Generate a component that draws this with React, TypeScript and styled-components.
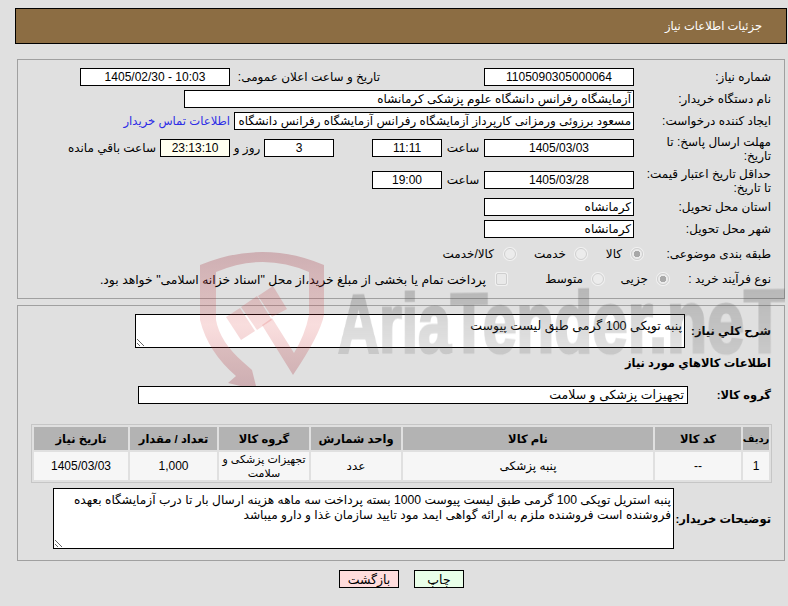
import React from "react";
import styled, { createGlobalStyle } from "styled-components";

const Global = createGlobalStyle`
  html, body { margin: 0; padding: 0; background: #e0e0e0; }
  body { font-family: "Liberation Sans", "DejaVu Sans", sans-serif; font-size: 12px; color: #000; }
`;

const Page = styled.div`
  position: relative;
  width: 788px;
  height: 606px;
  overflow: hidden;
  padding: 8px 1px 0 15px;
  box-sizing: border-box;
  direction: rtl;
`;

const Header = styled.div`
  height: 36px;
  box-sizing: border-box;
  border: 1px solid #000;
  background: #8c6d43;
  color: #fff;
  display: flex;
  align-items: center;
  padding-right: 24px;
  font-size: 11.5px;
`;

const Panel = styled.section<{ $h: number; $mt: number }>`
  box-sizing: border-box;
  height: ${(p) => p.$h}px;
  margin: ${(p) => p.$mt}px 2px 0 2px;
  border: 1px solid #a0a0a0;
  padding-right: 13px;
`;

const Row = styled.div<{ $top: number; $h?: number }>`
  display: flex;
  align-items: center;
  margin-top: ${(p) => p.$top}px;
  height: ${(p) => p.$h ?? 18}px;
`;

const Label = styled.div<{ $pt?: number }>`
  width: 134px;
  flex: none;
  line-height: 14px;
  margin-left: 3px;
  padding-top: ${(p) => p.$pt ?? 0}px;
`;

const StrongLabel = styled.div<{ $w: number }>`
  width: ${(p) => p.$w}px;
  flex: none;
  font-weight: 700;
  font-size: 11.5px;
  white-space: nowrap;
`;

const Field = styled.div<{ $w: number; $center?: boolean; $bg?: string; $pr?: number; $fs?: number; $mr?: number; $ltr?: boolean }>`
  width: ${(p) => p.$w}px;
  height: 18px;
  flex: none;
  box-sizing: border-box;
  margin-right: ${(p) => p.$mr ?? 0}px;
  border: 1px solid #000;
  background: ${(p) => p.$bg ?? "#fff"};
  direction: ${(p) => (p.$ltr ? "ltr" : "rtl")};
  text-align: ${(p) => (p.$center ? "center" : "right")};
  line-height: 16px;
  padding-right: ${(p) => (p.$center ? 0 : p.$pr ?? 2)}px;
  white-space: nowrap;
  overflow: hidden;
  font-size: ${(p) => p.$fs ?? 12}px;
`;

const Caption = styled.div<{ $w?: number; $mr?: number; $right?: boolean }>`
  flex: none;
  width: ${(p) => (p.$w ? `${p.$w}px` : "auto")};
  margin-right: ${(p) => p.$mr ?? 0}px;
  text-align: ${(p) => (p.$right ? "right" : "center")};
  white-space: nowrap;
`;

const ContactLink = styled.a`
  color: #2d2de6;
  margin-right: 4px;
  white-space: nowrap;
  text-decoration: none;
  font-size: 11.6px;
`;

const Options = styled.div`
  display: flex;
  align-items: center;
`;

const Radio = styled.span<{ $on?: boolean; $ml: number; $mr?: number }>`
  width: 12px;
  height: 12px;
  flex: none;
  box-sizing: border-box;
  border-radius: 50%;
  border: 1px solid #cfcfcf;
  background: ${(p) => (p.$on ? "radial-gradient(circle, #a9a9a9 0 3px, #ececec 3.5px)" : "#ececec")};
  box-shadow: 0 0 0 1px #f1f1f1;
  margin-left: ${(p) => p.$ml}px;
  margin-right: ${(p) => p.$mr ?? 0}px;
`;

const Check = styled.span<{ $ml: number }>`
  width: 11px;
  height: 12px;
  flex: none;
  box-sizing: border-box;
  border: 1px solid #cfcfcf;
  background: #e9e9e9;
  border-radius: 2px;
  box-shadow: 0 0 0 1px #f1f1f1;
  margin-left: ${(p) => p.$ml}px;
`;

const OptionText = styled.span<{ $w?: number; $fs?: number }>`
  white-space: nowrap;
  flex: none;
  width: ${(p) => (p.$w ? `${p.$w}px` : "auto")};
  font-size: ${(p) => p.$fs ?? 12}px;
`;

const Area = styled.textarea<{ $w: number; $h: number; $fs?: number }>`
  display: block;
  box-sizing: border-box;
  width: ${(p) => p.$w}px;
  height: ${(p) => p.$h}px;
  flex: none;
  margin: 0;
  border: 1px solid #000;
  border-radius: 0;
  background: #fff;
  padding: 4px 2px 0 2px;
  font: ${(p) => p.$fs ?? 12}px/15px "Liberation Sans", "DejaVu Sans", sans-serif;
  color: #000;
  outline: none;
  direction: rtl;
`;

const Grid = styled.div`
  display: grid;
  grid-template-columns: 26px 86px 250px 90px 90px 87px 94px;
  grid-template-rows: 23px 28px;
  gap: 2px;
  width: 735px;
  margin: 20px -1px 0 0;
  padding: 2px 2px;
  border: 1px solid #c6c6c6;
`;

const Th = styled.div<{ $fs?: number }>`
  background: #b3b3b3;
  font-weight: 700;
  font-size: ${(p) => p.$fs ?? 11.5}px;
  display: flex;
  align-items: center;
  justify-content: center;
  white-space: nowrap;
`;

const Td = styled.div<{ $fs?: number }>`
  background: #f6f6f6;
  display: flex;
  align-items: center;
  justify-content: center;
  text-align: center;
  line-height: 14px;
  font-size: ${(p) => p.$fs ?? 12}px;
  white-space: pre;
`;

const Actions = styled.div`
  display: flex;
  gap: 15px;
  margin-top: 9px;
  padding-right: 323px;
`;

const Btn = styled.button<{ $bg: string; $w: number }>`
  width: ${(p) => p.$w}px;
  height: 18px;
  box-sizing: border-box;
  padding: 0;
  border: 1px solid #000;
  background: ${(p) => p.$bg};
  font: 12.5px "Liberation Sans", "DejaVu Sans", sans-serif;
  color: #000;
`;

const Watermark = styled.div`
  position: absolute;
  top: 0;
  left: 0;
  width: 788px;
  height: 386px;
  overflow: hidden;
  pointer-events: none;
  direction: ltr;
`;

const ShieldBox = styled.div`
  position: absolute;
  left: 190px;
  top: 240px;
  width: 150px;
  height: 146px;
`;

const Brand = styled.span`
  position: absolute;
  left: 338px;
  top: 283px;
  font: 700 82px/82px "Liberation Sans", sans-serif;
  white-space: nowrap;
  color: #4e4e4e;
  -webkit-text-stroke: 3px #4e4e4e;
  opacity: 0.28;
  -webkit-mask-image: linear-gradient(180deg, #000 10%, rgba(0, 0, 0, 0.6) 80%);
  mask-image: linear-gradient(180deg, #000 10%, rgba(0, 0, 0, 0.6) 80%);
  transform-origin: 0 69px;
  transform: matrix3d(0.69, 0, 0, -0.00015, 0, 1, 0, 0, 0, 0, 1, 0, 0, 0, 0, 1);
`;

const heads = ["ردیف", "کد کالا", "نام کالا", "واحد شمارش", "گروه کالا", "تعداد / مقدار", "تاریخ نیاز"];
const cells = ["1", "--", "پنبه پزشکی", "عدد", "تجهیزات پزشکی و\nسلامت", "1,000", "1405/03/03"];

export default function App() {
  return (
    <Page>
      <Global />
      <Header>جزئیات اطلاعات نیاز</Header>

      <Panel $h={240} $mt={15}>
        <Row $top={8}>
          <Label>شماره نیاز:</Label>
          <Field $w={150} $center>1105090305000064</Field>
          <Caption $w={145} $mr={104} $right>تاریخ و ساعت اعلان عمومی:</Caption>
          <Field $w={150} $center $ltr $mr={5}>1405/02/30 - 10:03</Field>
        </Row>
        <Row $top={4}>
          <Label>نام دستگاه خریدار:</Label>
          <Field $w={450}>آزمایشگاه رفرانس دانشگاه علوم پزشکی کرمانشاه</Field>
        </Row>
        <Row $top={4}>
          <Label>ایجاد کننده درخواست:</Label>
          <Field $w={400} $fs={11.9}>مسعود برزوئی ورمزانی کارپرداز آزمایشگاه رفرانس آزمایشگاه رفرانس دانشگاه علوم پزشکی</Field>
          <ContactLink>اطلاعات تماس خریدار</ContactLink>
        </Row>
        <Row $top={9}>
          <Label $pt={2}>مهلت ارسال پاسخ: تا تاریخ:</Label>
          <Field $w={150} $center>1405/03/03</Field>
          <Caption $w={42}>ساعت</Caption>
          <Field $w={70} $center>11:11</Field>
          <Field $w={70} $center $mr={38}>3</Field>
          <Caption $w={34}>روز و</Caption>
          <Field $w={70} $center $bg="#fffff0">23:13:10</Field>
          <Caption $mr={4}>ساعت باقي مانده</Caption>
        </Row>
        <Row $top={14}>
          <Label $pt={2}>حداقل تاریخ اعتبار قیمت: تا تاریخ:</Label>
          <Field $w={150} $center>1405/03/28</Field>
          <Caption $w={42}>ساعت</Caption>
          <Field $w={70} $center>19:00</Field>
        </Row>
        <Row $top={9}>
          <Label>استان محل تحویل:</Label>
          <Field $w={150}>کرمانشاه</Field>
        </Row>
        <Row $top={4}>
          <Label>شهر محل تحویل:</Label>
          <Field $w={150}>کرمانشاه</Field>
        </Row>
        <Row $top={7}>
          <Label>طبقه بندی موضوعی:</Label>
          <Options>
            <Radio $on $ml={9} $mr={-9} />
            <OptionText $w={35}>کالا</OptionText>
            <Radio $ml={9} />
            <OptionText $w={50}>خدمت</OptionText>
            <Radio $ml={10} />
            <OptionText>کالا/خدمت</OptionText>
          </Options>
        </Row>
        <Row $top={7}>
          <Label>نوع فرآیند خرید :</Label>
          <Options>
            <Radio $on $ml={9} $mr={-35} />
            <OptionText $w={44}>جزیی</OptionText>
            <Radio $ml={9} />
            <OptionText $w={76}>متوسط</OptionText>
            <Check $ml={10} />
            <OptionText $fs={12.4}>پرداخت تمام یا بخشی از مبلغ خرید،از محل "اسناد خزانه اسلامی" خواهد بود.</OptionText>
          </Options>
        </Row>
      </Panel>

      <Panel $h={256} $mt={6}>
        <Row $top={8} $h={34}>
          <StrongLabel $w={86}>شرح کلي نياز:</StrongLabel>
          <Area $w={550} $h={34} $fs={12.5} readOnly defaultValue="پنبه توپکی 100 گرمی طبق لیست پیوست" />
        </Row>
        <Row $top={6}>
          <StrongLabel $w={300}>اطلاعات كالاهاي مورد نياز</StrongLabel>
        </Row>
        <Row $top={14}>
          <StrongLabel $w={83}>گروه کالا:</StrongLabel>
          <Field $w={550} $pr={3} $fs={12.5}>تجهیزات پزشکی و سلامت</Field>
        </Row>
        <Grid>
          {heads.map((h, i) => <Th key={h} $fs={i === 0 ? 10 : undefined}>{h}</Th>)}
          {cells.map((c, i) => <Td key={c} $fs={i === 4 ? 11 : undefined}>{c}</Td>)}
        </Grid>
        <Row $top={5} $h={61}>
          <StrongLabel $w={97}>توضیحات خریدار:</StrongLabel>
          <Area
            $w={621}
            $h={61}
            $fs={12.2}
            readOnly
            defaultValue="پنبه استریل توپکی 100 گرمی طبق لیست پیوست 1000 بسته پرداخت سه ماهه هزینه ارسال بار تا درب آزمایشگاه بعهده فروشنده است فروشنده ملزم به ارائه گواهی ایمد مود تایید سازمان غذا و دارو میباشد"
          />
        </Row>
      </Panel>

      <Actions>
        <Btn $bg="#e9ffe9" $w={50}>چاپ</Btn>
        <Btn $bg="#ffdcdc" $w={60}>بازگشت</Btn>
      </Actions>

      <Watermark aria-hidden="true">
        <ShieldBox>
          <svg xmlns="http://www.w3.org/2000/svg" width="150" height="146" viewBox="190 240 150 146">
            <defs>
              <linearGradient id="shieldFill" gradientUnits="userSpaceOnUse" x1="0" y1="250" x2="0" y2="386">
                <stop offset="0" stopColor="#a03a48" stopOpacity="0.3" />
                <stop offset="0.55" stopColor="#d83a3a" stopOpacity="0.17" />
                <stop offset="1" stopColor="#a03a48" stopOpacity="0.3" />
              </linearGradient>
            </defs>
            <path
              fill="url(#shieldFill)"
              d="M200 265 Q263 239 324 265 L324 315 Q320 335 293 375 L262 325 L272 318 L294 353 Q305 335 309 315 L309 272 Q263 252 216 272 L216 320 Q220 342 243 362 L252 370 L257 390 L228 383 L236 376 Q208 352 200 320 Z"
            />
            <polygon fill="url(#shieldFill)" points="226,317 240,308 255,331 241,340" />
            <polygon fill="url(#shieldFill)" points="241,307 257,296 272,320 257,330" />
            <polygon fill="url(#shieldFill)" points="258,296 273,286 287,309 272,317" />
          </svg>
        </ShieldBox>
        <Brand>AriaTender.neT</Brand>
      </Watermark>
    </Page>
  );
}
